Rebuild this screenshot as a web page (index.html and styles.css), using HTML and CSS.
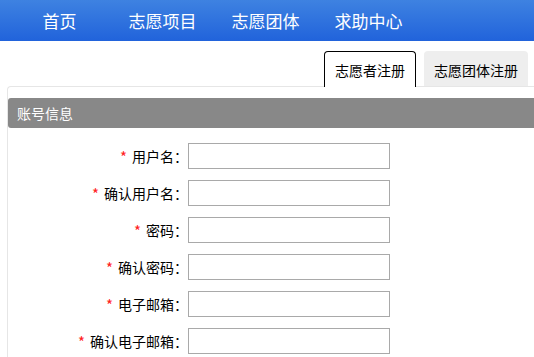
FILE: index.html
```html
<!DOCTYPE html>
<html lang="zh-CN">
<head>
<meta charset="utf-8">
<title>志愿者注册</title>
<link rel="stylesheet" href="styles.css">
</head>
<body>
<div class="nav">
  <ul class="nav-list">
    <li class="nav-item">首页</li>
    <li class="nav-item">志愿项目</li>
    <li class="nav-item">志愿团体</li>
    <li class="nav-item">求助中心</li>
  </ul>
</div>
<div class="tabs">
  <div class="tab tab-active">志愿者注册</div>
  <div class="tab tab-other">志愿团体注册</div>
</div>
<div class="panel">
  <div class="panel-head">账号信息</div>
  <div class="form">
    <label class="label"><span class="star">*</span>用户名：</label><input class="field" type="text">
    <label class="label"><span class="star">*</span>确认用户名：</label><input class="field" type="text">
    <label class="label"><span class="star">*</span>密码：</label><input class="field" type="password">
    <label class="label"><span class="star">*</span>确认密码：</label><input class="field" type="password">
    <label class="label"><span class="star">*</span>电子邮箱：</label><input class="field" type="text">
    <label class="label"><span class="star">*</span>确认电子邮箱：</label><input class="field" type="text">
  </div>
</div>
</body>
</html>
```

FILE: styles.css
```css
html {
  overflow: hidden;
}
body {
  margin: 0;
  background: #fff;
  font-family: "Noto Sans CJK SC", "Noto Sans", sans-serif;
  color: #000;
}
.nav {
  height: 41px;
  background: linear-gradient(#3e82e1, #2163db);
}
.nav-list {
  display: flex;
  margin: 0;
  padding: 0 0 0 8px;
  list-style: none;
}
.nav-item {
  width: 103px;
  text-align: center;
  color: #fff;
  font-size: 17px;
  line-height: 41px;
}
.tabs {
  display: flex;
  justify-content: flex-end;
  gap: 8px;
  margin-top: 10px;
  padding-right: 6px;
  height: 35px;
  font-size: 14px;
}
.tab {
  box-sizing: border-box;
  padding: 3px 10px 0;
  line-height: 32px;
  border-radius: 4px 4px 0 0;
}
.tab-active {
  position: relative;
  z-index: 1;
  height: 36px;
  border: 1px solid #000;
  border-bottom: none;
  background: #fff;
  padding-top: 2px;
}
.tab-other {
  height: 35px;
  background: #eeeeee;
}
.panel {
  margin-left: 7px;
  border-top: 1px solid #e6e6e6;
  border-left: 1px solid #e6e6e6;
  border-radius: 4px 0 0 0;
  padding-top: 11px;
  padding-bottom: 3px;
}
.panel-head {
  height: 30px;
  line-height: 30px;
  padding-left: 9px;
  background: #888888;
  color: #fff;
  font-size: 14px;
  border-radius: 3px 0 0 3px;
}
.form {
  display: grid;
  grid-template-columns: 180px 202px;
  grid-auto-rows: 26px;
  row-gap: 11px;
  padding-top: 15px;
  align-items: center;
}
.label {
  display: flex;
  justify-content: flex-end;
  align-items: center;
  height: 26px;
  font-size: 14px;
  line-height: 26px;
}
.star {
  color: #ff2020;
  font-size: 15px;
  line-height: 26px;
  margin-right: 5px;
  position: relative;
  top: 1px;
}
.field {
  box-sizing: border-box;
  width: 202px;
  height: 26px;
  margin: 0;
  border: 1px solid #a9a9a9;
  background: #fff;
  padding: 0 4px;
}
```
